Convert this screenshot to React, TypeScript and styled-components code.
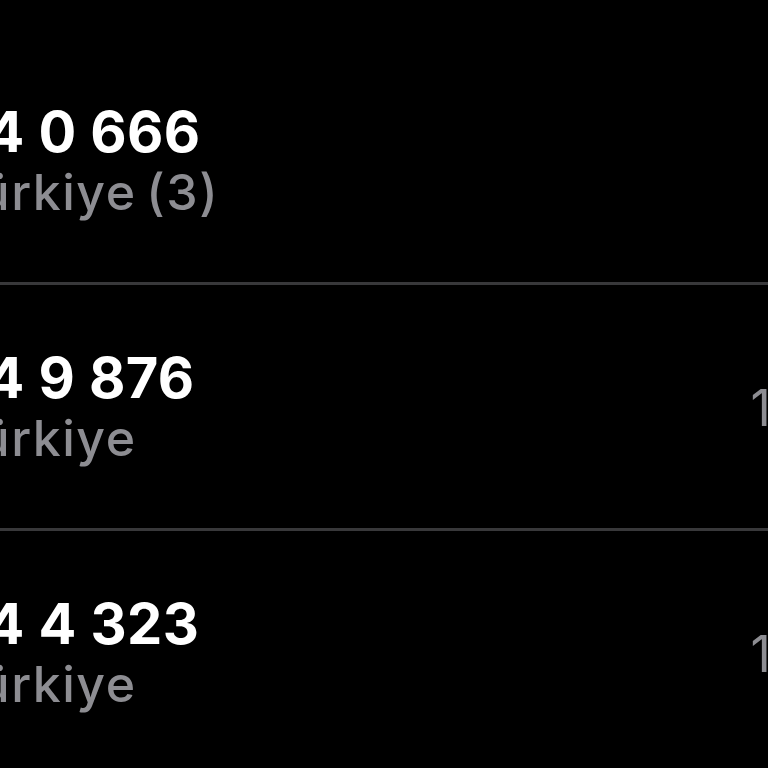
import React from "react";
import styled, { createGlobalStyle } from "styled-components";

const Global = createGlobalStyle`
  html, body { margin: 0; padding: 0; background: #000; }
  body { font-family: Inter, "Noto Sans", "Liberation Sans", sans-serif; }
`;

const Screen = styled.div`
  width: 768px;
  height: 768px;
  overflow: hidden;
  background: #000;
  padding-top: 39px;
  box-sizing: border-box;
`;

const List = styled.ul`
  list-style: none;
  margin: 0 -372px 0 -90px;
  padding: 0;
`;

const Row = styled.li`
  height: 246px;
  box-sizing: border-box;
  padding: 62px 40px 0 0;
  border-bottom: 3px solid #38383a;
  display: flex;
  justify-content: space-between;
  align-items: flex-start;
`;

const Info = styled.div`
  display: flex;
  flex-direction: column;
`;

const Number = styled.div`
  color: #fff;
  font-weight: 700;
  font-size: 56px;
  line-height: 62px;
  letter-spacing: 0.4px;
`;

const Sub = styled.div`
  margin-left: 38px;
  color: #8d8d92;
  font-weight: 500;
  font-size: 50px;
  line-height: 58px;
  letter-spacing: 1.5px;
  word-spacing: -5px;
`;

const Meta = styled.div`
  display: flex;
  align-items: center;
  gap: 24px;
  margin-top: 32px;
  color: #8d8d92;
  font-size: 50px;
  line-height: 58px;
  letter-spacing: 1px;
`;

const InfoIcon = () => (
  <svg width="52" height="52" viewBox="0 0 24 24" fill="none" stroke="#0a84ff" strokeWidth="1.6">
    <circle cx="12" cy="12" r="10" />
    <line x1="12" y1="11" x2="12" y2="17" strokeLinecap="round" />
    <circle cx="12" cy="7.5" r="0.6" fill="#0a84ff" />
  </svg>
);

const calls = [
  { number: "444 0 666", sub: "Türkiye (3)", time: "Dün" },
  { number: "444 9 876", sub: "Türkiye", time: "10.03.2024" },
  { number: "444 4 323", sub: "Türkiye", time: "10.03.2024" },
];

export default function App() {
  return (
    <>
      <Global />
      <Screen>
        <List>
          {calls.map((c) => (
            <Row key={c.number}>
              <Info>
                <Number>{c.number}</Number>
                <Sub>{c.sub}</Sub>
              </Info>
              <Meta>
                <span>{c.time}</span>
                <InfoIcon />
              </Meta>
            </Row>
          ))}
        </List>
      </Screen>
    </>
  );
}
